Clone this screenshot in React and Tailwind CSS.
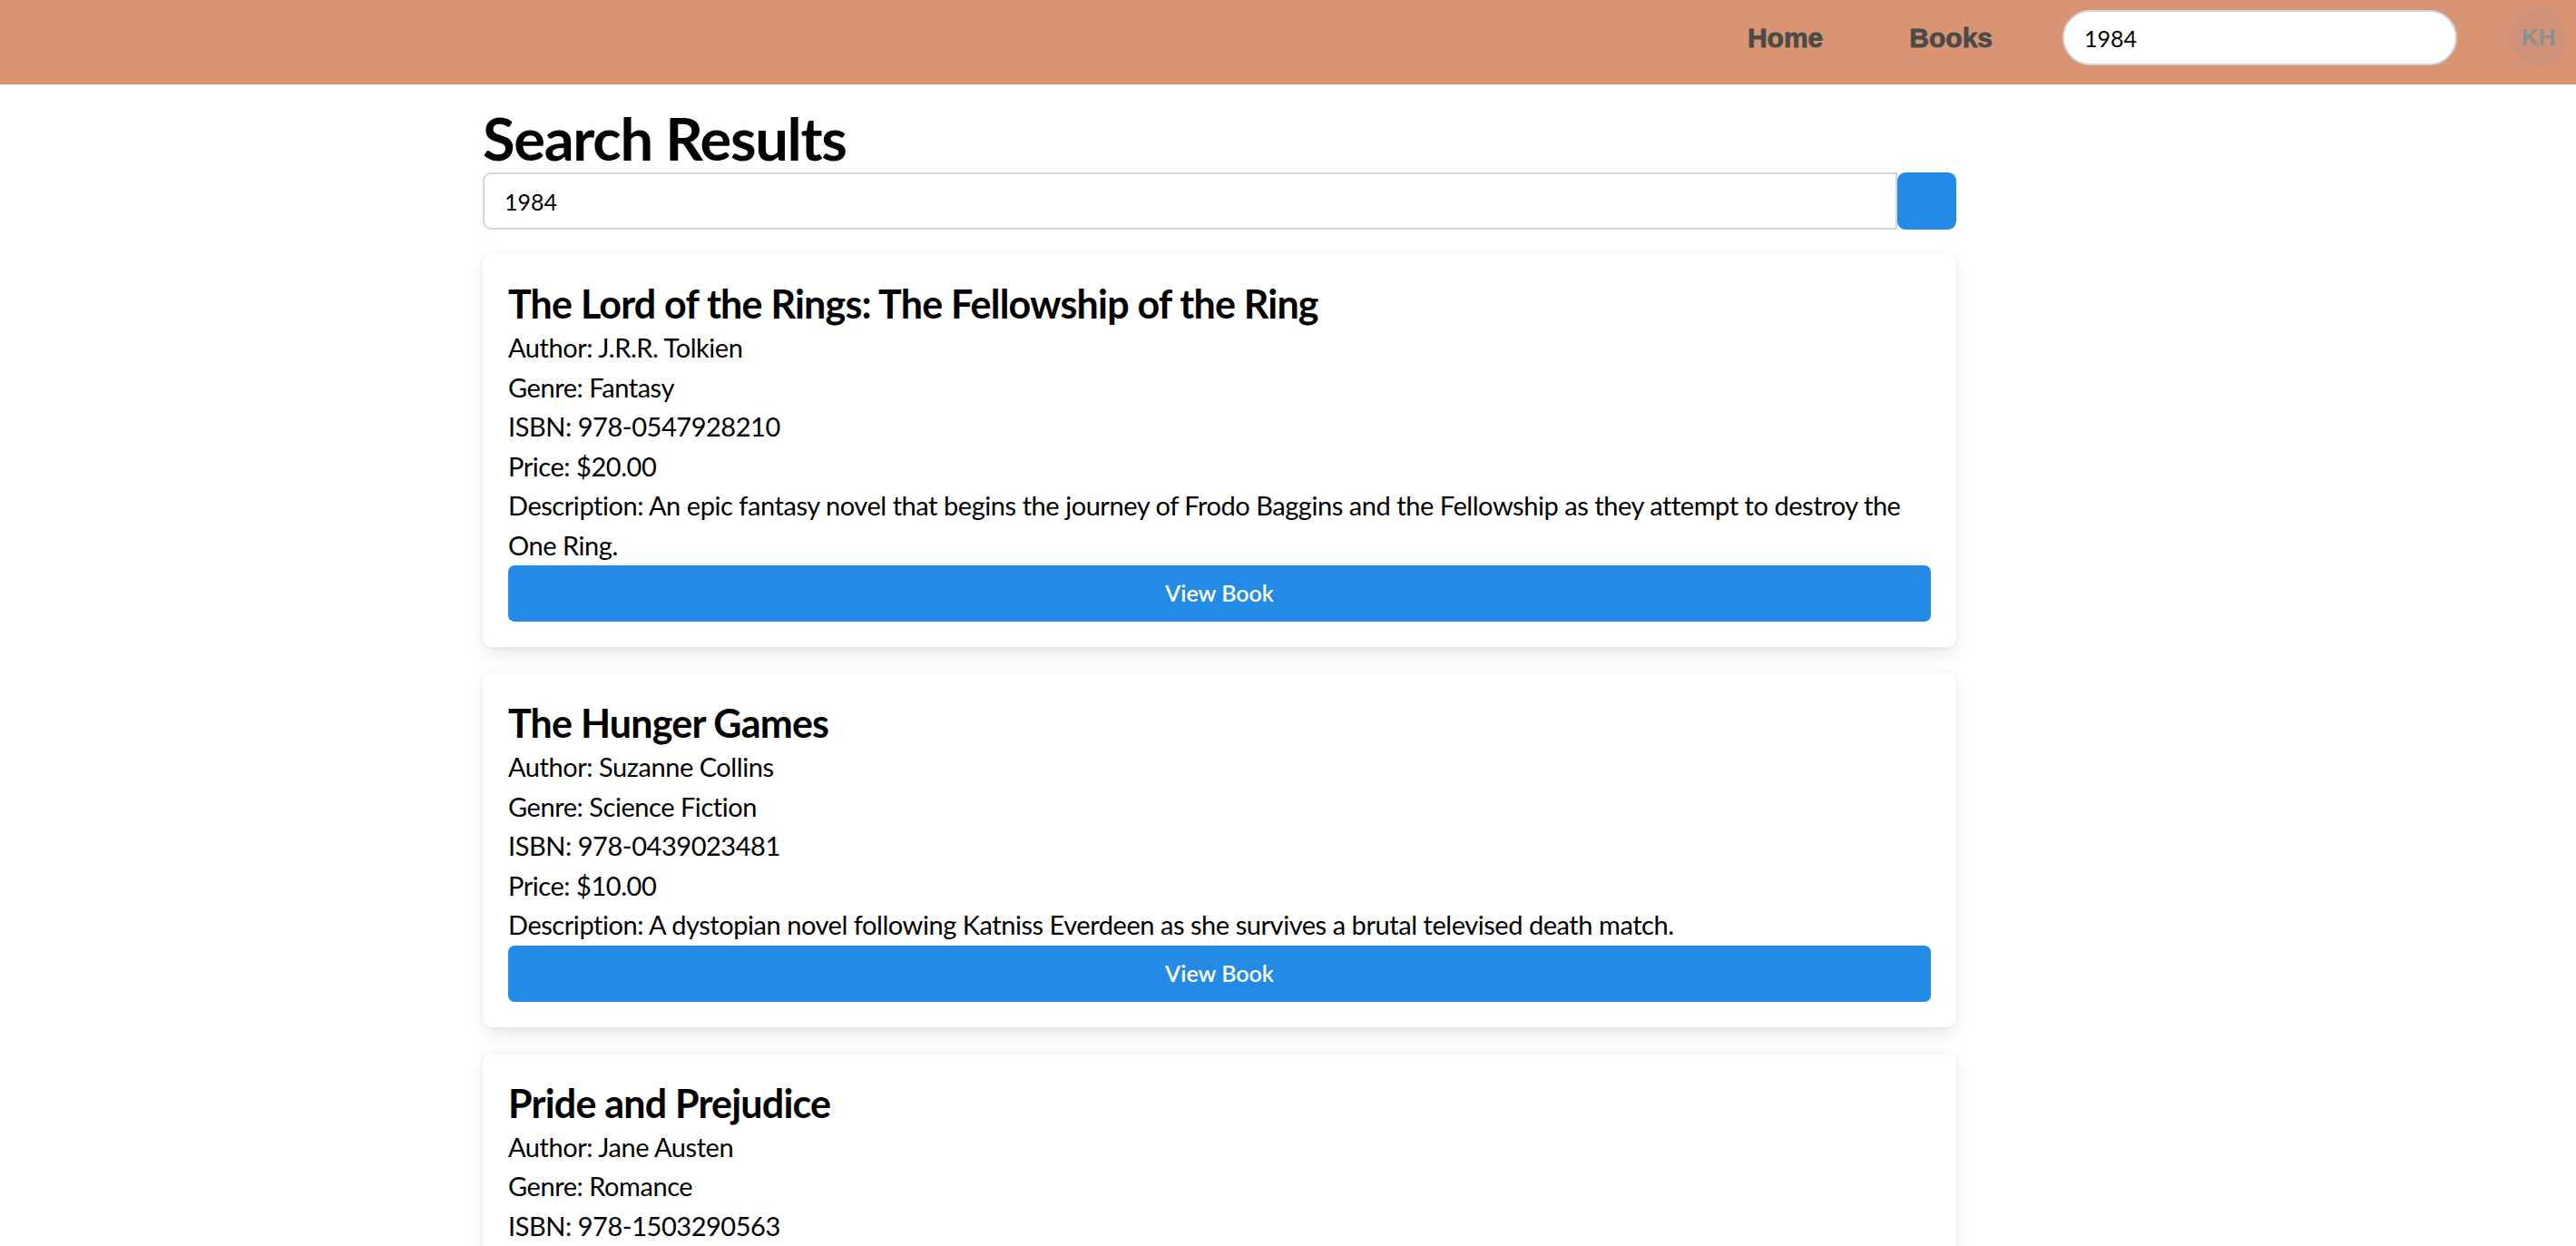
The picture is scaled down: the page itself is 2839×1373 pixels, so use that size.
import React from "react";

const books = [
    {
        title: "The Lord of the Rings: The Fellowship of the Ring",
        author: "J.R.R. Tolkien",
        genre: "Fantasy",
        isbn: "978-0547928210",
        price: "$20.00",
        description:
            "An epic fantasy novel that begins the journey of Frodo Baggins and the Fellowship as they attempt to destroy the One Ring.",
    },
    {
        title: "The Hunger Games",
        author: "Suzanne Collins",
        genre: "Science Fiction",
        isbn: "978-0439023481",
        price: "$10.00",
        description:
            "A dystopian novel following Katniss Everdeen as she survives a brutal televised death match.",
    },
    {
        title: "Pride and Prejudice",
        author: "Jane Austen",
        genre: "Romance",
        isbn: "978-1503290563",
        price: "$12.00",
        description:
            "A classic novel of manners following Elizabeth Bennet and her complicated relationship with Mr. Darcy.",
    },
];

const BookCard = ({ book }) => {
    return (
        <div className="bg-white rounded-[10px] p-[28px] mb-[29px] shadow-[0_8px_22px_-4px_rgba(0,0,0,0.13),0_0_6px_rgba(0,0,0,0.05)]">
            <h2 className="text-[43px] font-bold leading-[53px] tracking-[-0.8px]">{book.title}</h2>
            <div className="text-[29px] leading-[43.5px] tracking-[-0.45px]">
                <p>Author: {book.author}</p>
                <p>Genre: {book.genre}</p>
                <p>ISBN: {book.isbn}</p>
                <p>Price: {book.price}</p>
                <p>Description: {book.description}</p>
            </div>
            <button
                type="button"
                className="mt-[1px] w-full h-[62px] bg-[#238be5] text-white text-[25px] font-semibold rounded-[7px]"
            >
                View Book
            </button>
        </div>
    );
};

const App = () => {
    return (
        <div className="min-h-screen bg-white text-black font-['Lato','Open_Sans',sans-serif]">
            {/* Top navigation */}
            <nav className="h-[93px] bg-[#d99474] flex items-center justify-end pb-[10px] pr-[9px]">
                <a href="#" className="font-['Liberation_Sans',Arial,sans-serif] font-bold text-[30px] text-[#4a4a4a] [-webkit-text-stroke:0.8px_#4a4a4a]">
                    Home
                </a>
                <a href="#" className="ml-[95px] font-['Liberation_Sans',Arial,sans-serif] font-bold text-[30px] text-[#4a4a4a] [-webkit-text-stroke:0.8px_#4a4a4a]">
                    Books
                </a>
                <input
                    type="text"
                    defaultValue="1984"
                    className="ml-[77px] w-[435px] h-[61px] rounded-full bg-white border-2 border-[#cfd3d8] pl-[22px] text-[25px] outline-none"
                />
                <div className="ml-[57px] w-[65px] h-[65px] rounded-full bg-[#d09279] flex items-center justify-center font-['Liberation_Sans',Arial,sans-serif] font-bold text-[26px] text-[#8a9196]">
                    KH
                </div>
            </nav>

            {/* Results */}
            <main className="ml-[532px] w-[1624px] pt-[21px]">
                <h1 className="text-[65px] font-bold leading-[76px] tracking-[-1.3px]">Search Results</h1>
                <div className="flex mb-[27px]">
                    <input
                        type="text"
                        defaultValue="1984"
                        className="flex-1 h-[63px] border-2 border-[#d6d6d6] rounded-l-[9px] pl-[22px] text-[25px] outline-none"
                    />
                    <button type="button" className="w-[65px] h-[63px] bg-[#238be5] rounded-[9px]"></button>
                </div>

                {books.map((book) => (
                    <BookCard key={book.isbn} book={book} />
                ))}
            </main>
        </div>
    );
};

export default App;
